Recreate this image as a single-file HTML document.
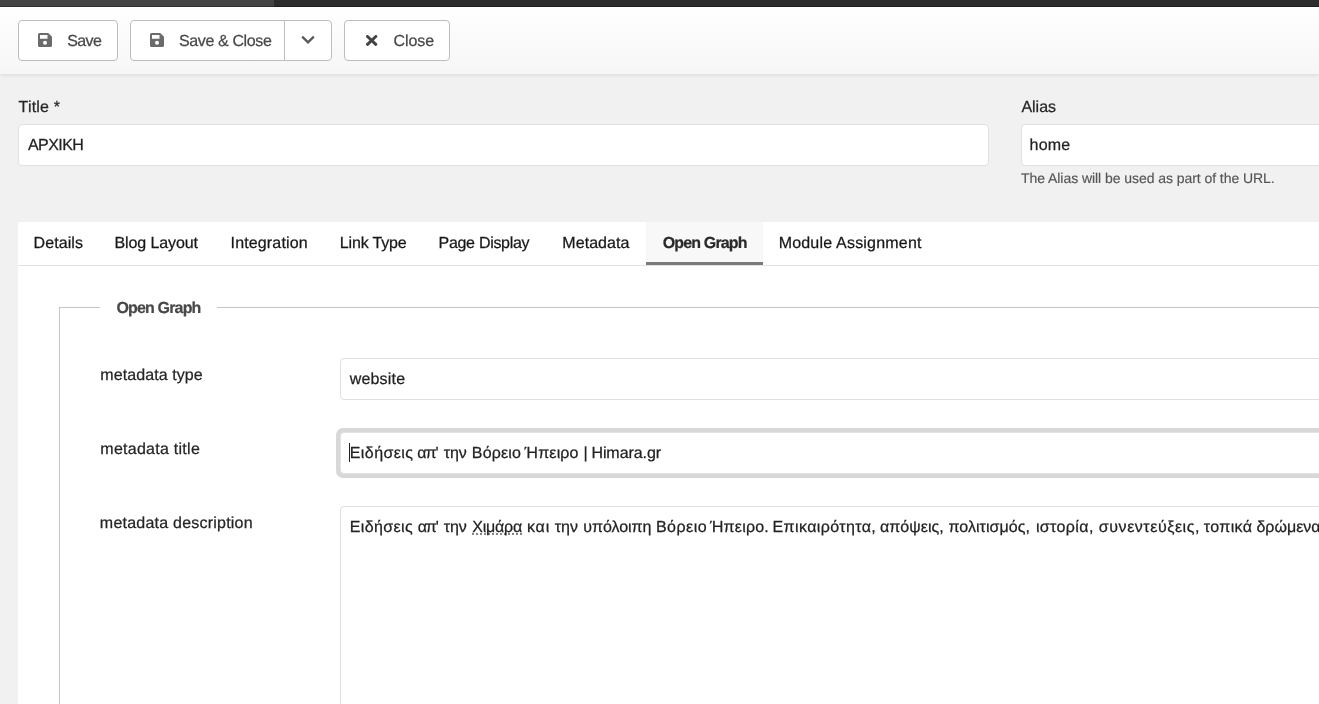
<!DOCTYPE html>
<html lang="en">
<head>
<meta charset="utf-8">
<title>Menus: Edit Item</title>
<style>
*{box-sizing:border-box;margin:0;padding:0}
html,body{width:1319px;height:704px;overflow:hidden}
body{transform:translateZ(0);position:relative;background:#f1f1f1;font-family:"Liberation Sans",sans-serif;font-size:16px;color:#222;-webkit-font-smoothing:antialiased}
.abs{position:absolute}
.t{position:absolute;white-space:nowrap;line-height:16px;font-size:16px;text-rendering:geometricPrecision;-webkit-text-stroke:0.25px currentColor;margin-top:0.5px}

/* top status strip */
#strip{left:0;top:0;width:1319px;height:7px;background:#2d2d2d}
#strip i{display:block;width:274px;height:7px;background:#444}
#strip:after{content:'';position:absolute;left:0;top:6px;width:1319px;height:1px;background:rgba(0,0,0,.28)}

/* toolbar */
#toolbar{left:0;top:7px;width:1319px;height:67px;background:linear-gradient(#fff,#f6f6f6);box-shadow:0 1px 4px rgba(0,0,0,.10)}
.btn{position:absolute;top:13px;height:41px;background:#fff;border:1px solid #bdbdbd;border-radius:4px;color:#444;font:inherit;text-align:left;overflow:visible;cursor:pointer}
.btn svg{position:absolute}
.btn .t{color:#484848}

/* form */
label.t{color:#252525}
.inp{position:absolute;background:#fff;border:1px solid #e0e0e0;border-radius:4px}
.inp .t{color:#222}
#help{font-size:14px;line-height:14px;color:#555;-webkit-text-stroke:0.15px #555;margin-top:0}

/* tabs */
#panel{left:18px;top:222px;width:1301px;height:482px;background:#fff}
#tabbar{left:0;top:0;width:1301px;height:44px;border-bottom:1px solid #e2e2e2}
.tab{position:absolute;top:0;height:43px}
.tab .t{top:13px;left:16px;color:#171717}
.tab.on{background:#f8f8f8;border-bottom:3px solid #7a7a7a;height:43px}
.tab.on .t{font-weight:bold;color:#2a2a2a;font-size:16px;-webkit-text-stroke:0.2px #2a2a2a}

/* fieldset */
#fs{left:41px;top:85px;width:1270px;height:400px;border:1px solid #c4c4c4;border-right:0;border-bottom:0}
#legend{left:40px;top:-12px;width:117px;height:24px;background:#fff}
#legend .t{left:17px;top:4px;font-weight:bold;color:#484848;font-size:16px;-webkit-text-stroke:0.2px #484848}
.flabel{color:#252525}
.ring{position:absolute;background:#d8d8d8;border-radius:7px}
.sp{text-decoration:underline dotted #666;text-decoration-skip-ink:none;text-underline-offset:2px}
/*FIT*/
#t-save{letter-spacing:-0.566px;margin-left:0.15px}
#t-saveclose{letter-spacing:-0.373px;margin-left:-0.04px}
#t-close{letter-spacing:-0.075px;margin-left:-0.55px}
#l-title{letter-spacing:0.172px;margin-left:0.59px}
#v-title{letter-spacing:-0.56px;margin-left:0.94px}
#l-alias{letter-spacing:-0.008px;margin-left:0.39px}
#v-alias{letter-spacing:0.252px;margin-left:-0.53px}
#help{letter-spacing:-0.057px;margin-left:-0.01px}
#tab1{letter-spacing:0.095px;margin-left:-0.47px}
#tab2{letter-spacing:-0.112px;margin-left:-0.47px}
#tab3{letter-spacing:0.149px;margin-left:-0.48px}
#tab4{letter-spacing:-0.16px;margin-left:0.8px}
#tab5{letter-spacing:-0.29px;margin-left:0.53px}
#tab6{letter-spacing:0.046px;margin-left:0.35px}
#tab7{letter-spacing:-0.852px;margin-left:0.76px}
#tab8{letter-spacing:0.198px;margin-left:-0.36px}
#t-legend{letter-spacing:-0.83px;margin-left:-0.6px}
#l-type{letter-spacing:0.087px;margin-left:-0.71px}
#l-mtitle{letter-spacing:0.265px;margin-left:-0.71px}
#l-desc{letter-spacing:0.225px;margin-left:-1.18px}
#v-type{letter-spacing:0.186px;margin-left:-0.31px}
/*ENDFIT*/
/*FITW*/
#d0{letter-spacing:0.368px;margin-left:-0.2px}
#d1{letter-spacing:-1.1px;margin-left:0.13px}
#d2{letter-spacing:-0.033px;margin-left:1.58px}
#d3{letter-spacing:-0.2px;margin-left:0.87px}
#d4{letter-spacing:0.824px;margin-left:0.5px}
#d5{letter-spacing:-0.074px;margin-left:0.31px}
#d6{letter-spacing:-0.061px;margin-left:0.97px}
#d7{letter-spacing:0.472px;margin-left:0.23px}
#d8{letter-spacing:0.211px;margin-left:-1.54px}
#d9{letter-spacing:0.383px;margin-left:-0.93px}
#d10{letter-spacing:0.038px;margin-left:-0.66px}
#d11{letter-spacing:0.034px;margin-left:0.3px}
#d12{letter-spacing:0.382px;margin-left:1.61px}
#d13{letter-spacing:0.547px;margin-left:0.65px}
#d14{letter-spacing:0.346px;margin-left:-0.57px}
#d15{letter-spacing:0.0px;margin-left:-0.37px}
#m0{letter-spacing:0.423px;margin-left:-0.24px}
#m1{letter-spacing:-1.1px;margin-left:-0.62px}
#m2{letter-spacing:-0.035px;margin-left:1.92px}
#m3{letter-spacing:0.172px;margin-left:0.55px}
#m4{letter-spacing:0.153px;margin-left:-1.0px}
#m5{letter-spacing:0.0px;margin-left:0.49px}
#m6{letter-spacing:-0.072px;margin-left:-0.8px}
/*ENDFITW*/
</style>
</head>
<body>

<div id="strip" class="abs"><i></i></div>

<div id="toolbar" class="abs">
  <button type="button" class="btn" id="b-save" style="left:18px;width:100px">
    <svg width="14" height="14" viewBox="0 0 14 14" style="left:19px;top:12px"><path fill="#6b6b6b" d="M1.5 0H10.2L14 3.8V12.5A1.5 1.5 0 0 1 12.500 14H1.5A1.5 1.5 0 0 1 0 12.500V1.5A1.500 1.500 0 0 1 1.500 0ZM2 2V5.800H9.500V2ZM7 7.700A2 2 0 1 0 7 11.700A2 2 0 1 0 7 7.700Z"/></svg>
    <span class="t" id="t-save" style="left:48px;top:12px">Save</span>
  </button>
  <button type="button" class="btn" id="b-saveclose" style="left:130px;width:155px;border-radius:4px 0 0 4px">
    <svg width="14" height="14" viewBox="0 0 14 14" style="left:19px;top:12px"><path fill="#6b6b6b" d="M1.5 0H10.2L14 3.8V12.5A1.5 1.5 0 0 1 12.500 14H1.5A1.5 1.5 0 0 1 0 12.500V1.5A1.500 1.500 0 0 1 1.500 0ZM2 2V5.800H9.500V2ZM7 7.700A2 2 0 1 0 7 11.700A2 2 0 1 0 7 7.700Z"/></svg>
    <span class="t" id="t-saveclose" style="left:48px;top:12px">Save &amp; Close</span>
  </button>
  <button type="button" aria-label="More save actions" class="btn" id="b-drop" style="left:284px;width:48px;border-radius:0 4px 4px 0">
    <svg width="16" height="10" viewBox="0 0 16 10" style="left:15.200px;top:14.100px"><path fill="none" stroke="#5a5a5a" stroke-width="2.400" d="M2.200 1.600L8 7.300L13.800 1.600"/></svg>
  </button>
  <button type="button" class="btn" id="b-close" style="left:344px;width:106px">
    <svg width="12" height="11" viewBox="0 0 12 11" style="left:20.7px;top:13.7px"><path fill="none" stroke="#444" stroke-width="3" stroke-linecap="round" d="M1.500 1.500L9.800 9.300M9.800 1.500L1.500 9.300"/></svg>
    <span class="t" id="t-close" style="left:49px;top:12px">Close</span>
  </button>
</div>

<label class="t" id="l-title" style="left:18px;top:99px">Title *</label>
<div class="inp" id="i-title" style="left:18px;top:124px;width:971px;height:42px">
  <span class="t" id="v-title" style="left:8px;top:12px">ΑΡΧΙΚΗ</span>
</div>

<label class="t" id="l-alias" style="left:1021px;top:99px">Alias</label>
<div class="inp" id="i-alias" style="left:1021px;top:124px;width:320px;height:42px">
  <span class="t" id="v-alias" style="left:8px;top:12px">home</span>
</div>
<span class="t" id="help" style="left:1021px;top:171px">The Alias will be used as part of the URL.</span>

<div id="panel" class="abs">
  <div id="tabbar" class="abs">
    <div class="tab" style="left:0;width:81px"><span class="t" id="tab1">Details</span></div>
    <div class="tab" style="left:81px;width:116px"><span class="t" id="tab2">Blog Layout</span></div>
    <div class="tab" style="left:197px;width:108px"><span class="t" id="tab3">Integration</span></div>
    <div class="tab" style="left:305px;width:99px"><span class="t" id="tab4">Link Type</span></div>
    <div class="tab" style="left:404px;width:124px"><span class="t" id="tab5">Page Display</span></div>
    <div class="tab" style="left:528px;width:100px"><span class="t" id="tab6">Metadata</span></div>
    <div class="tab on" style="left:628px;width:117px"><span class="t" id="tab7">Open Graph</span></div>
    <div class="tab" style="left:745px;width:175px"><span class="t" id="tab8">Module Assignment</span></div>
  </div>

  <div id="fs" class="abs">
    <div id="legend" class="abs"><span class="t" id="t-legend">Open Graph</span></div>

    <label class="t flabel" id="l-type" style="left:41px;top:59px">metadata type</label>
    <div class="inp" id="i-type" style="left:280px;top:50px;width:1000px;height:42px">
      <span class="t" id="v-type" style="left:9px;top:12px">website</span>
    </div>

    <label class="t flabel" id="l-mtitle" style="left:41px;top:133px">metadata title</label>
    <div class="ring" style="left:276px;top:120px;width:1000px;height:50px"></div>
    <div class="inp" id="i-mtitle" style="left:280px;top:124px;width:1000px;height:42px;border-color:#e3e3e3">
      <span class="abs" style="left:8px;top:10px;width:1px;height:19px;background:#222"></span>
      <span class="t" id="v-mtitle" style="left:9px;top:12px"><span id="m0">Ειδήσεις</span> <span id="m1">απ'</span> <span id="m2">την</span> <span id="m3">Βόρειο</span> <span id="m4">Ήπειρο</span> <span id="m5">|</span> <span id="m6">Himara.gr</span></span>
    </div>

    <label class="t flabel" id="l-desc" style="left:41px;top:207.500px">metadata description</label>
    <div class="inp" id="i-desc" style="left:280px;top:198px;width:1000px;height:300px">
      <span class="t" id="v-desc" style="left:9px;top:12px"><span id="d0">Ειδήσεις</span> <span id="d1">απ'</span> <span id="d2">την</span> <span id="d3" class="sp">Χιμάρα</span> <span id="d4">και</span> <span id="d5">την</span> <span id="d6">υπόλοιπη</span> <span id="d7">Βόρειο</span> <span id="d8">Ήπειρο.</span> <span id="d9">Επικαιρότητα,</span> <span id="d10">απόψεις,</span> <span id="d11">πολιτισμός,</span> <span id="d12">ιστορία,</span> <span id="d13">συνεντεύξεις,</span> <span id="d14">τοπικά</span> <span id="d15">δρώμενα,</span> αθλητικά και φωτογραφίες.</span>
    </div>
  </div>
</div>

</body>
</html>
